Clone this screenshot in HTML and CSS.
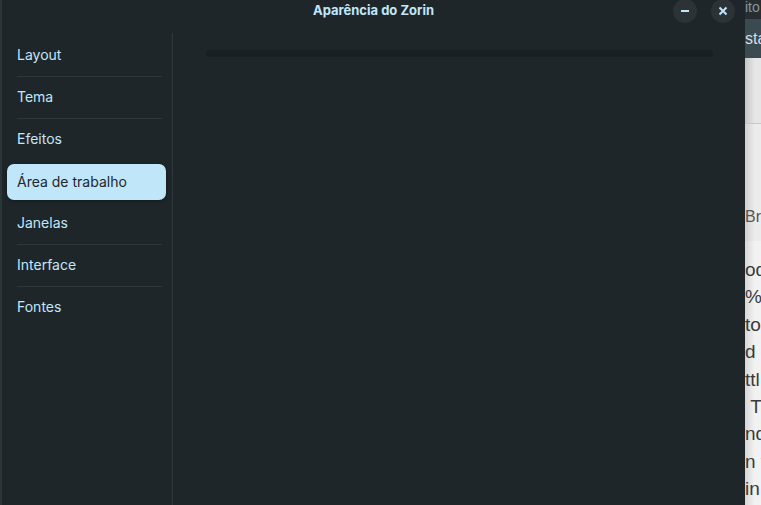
FILE: index.html
```html
<!DOCTYPE html>
<html lang="pt">
<head>
  <meta charset="UTF-8" />
  <title>Aparência do Zorin</title>
  <link rel="stylesheet" href="styles.css">
</head>
<body>
  <div class="desktop">
    <div class="window">
      <div class="titlebar">
        <span class="title">Aparência do Zorin</span>
        <div class="win-buttons">
          <button class="win-btn" aria-label="Minimizar">
            <svg width="10" height="10" viewBox="0 0 10 10"><path d="M1 5h8" stroke="#c0e6fa" stroke-width="2"/></svg>
          </button>
          <button class="win-btn" aria-label="Fechar">
            <svg width="10" height="10" viewBox="0 0 10 10"><path d="M1.5 1.5l7 7M8.5 1.5l-7 7" stroke="#c0e6fa" stroke-width="2"/></svg>
          </button>
        </div>
      </div>
      <div class="body">
        <ul class="sidebar">
          <li class="item">Layout</li>
          <li class="item">Tema</li>
          <li class="item">Efeitos</li>
          <li class="item selected">Área de trabalho</li>
          <li class="item">Janelas</li>
          <li class="item">Interface</li>
          <li class="item">Fontes</li>
        </ul>
        <div class="content">
          <div class="trough"></div>
        </div>
      </div>
    </div>

    <!-- browser window peeking out behind -->
    <div class="behind">
      <div class="behind-tabs">ito</div>
      <div class="behind-toolbar">sta</div>
      <div class="behind-bar"></div>
      <div class="behind-head">Bra</div>
      <div class="behind-text">
        <p>od</p>
        <p>% c</p>
        <p>to</p>
        <p>d g</p>
        <p>ttl</p>
        <p>&nbsp;Ti</p>
        <p>nd</p>
        <p>n t</p>
        <p>in</p>
      </div>
    </div>
  </div>
</body>
</html>
```

FILE: styles.css
```css
:root {
  --bg: #1f262a;
  --accent: #c0e6fa;
  --line: #2e373b;
  --trough: #191f22;
}

html, body {
  margin: 0;
  padding: 0;
  height: 100%;
  overflow: hidden;
}

body {
  font-family: Inter, 'Noto Sans', sans-serif;
  background: var(--bg);
}

.desktop {
  display: flex;
  height: 505px;
}

.window {
  width: 745px;
  flex: none;
  background: var(--bg);
  border-left: 2px solid #2b363a;
  box-sizing: border-box;
  display: flex;
  flex-direction: column;
}

.titlebar {
  height: 33px;
  flex: none;
  display: flex;
  justify-content: center;
  position: relative;
}

.title {
  color: var(--accent);
  font-weight: 700;
  font-size: 13px;
  line-height: 21px;
}

.win-buttons {
  position: absolute;
  right: 10px;
  top: -1px;
  display: flex;
  gap: 14px;
}

.win-btn {
  width: 24px;
  height: 24px;
  border-radius: 50%;
  border: none;
  padding: 0;
  background: #2b3337;
  display: flex;
  align-items: center;
  justify-content: center;
}

.body {
  flex: 1;
  display: flex;
}

.sidebar {
  list-style: none;
  margin: 0;
  padding: 2px 6px 0 5px;
  width: 171px;
  box-sizing: border-box;
  border-right: 1px solid var(--line);
}

.item {
  height: 42px;
  line-height: 40px;
  padding-left: 10px;
  color: var(--accent);
  font-size: 14px;
  position: relative;
}

.item::after {
  content: '';
  position: absolute;
  left: 10px;
  right: 4px;
  bottom: 0;
  border-bottom: 1px solid var(--line);
}

.item:nth-child(3)::after,
.selected::after,
.item:last-child::after {
  display: none;
}

.selected {
  background: var(--accent);
  color: #1f262a;
  border-radius: 7px;
  height: 36px;
  line-height: 36px;
  margin: 3px 0;
  box-shadow: 0 1px 4px rgba(0, 0, 0, 0.4);
}

.content {
  flex: 1;
  padding: 17px 32px 0 33px;
}

.trough {
  height: 7px;
  border-radius: 4px;
  background: var(--trough);
}

.behind {
  flex: 1;
  display: flex;
  flex-direction: column;
  font-family: 'Liberation Sans', sans-serif;
  overflow: hidden;
  white-space: nowrap;
}

.behind-tabs {
  height: 19px;
  background: #262e31;
  color: #8c9599;
  font-size: 14px;
  line-height: 14px;
}

.behind-toolbar {
  height: 39px;
  background: #3a4a50;
  color: #d7dde0;
  font-size: 16px;
  line-height: 40px;
}

.behind-bar {
  height: 65px;
  background: linear-gradient(90deg, #c4c4c4, #e6e6e6 60%);
  border-bottom: 1px solid #c8c8c8;
}

.behind-head {
  height: 117px;
  background: linear-gradient(90deg, #cfcfcf, #ececec 60%);
  color: #555;
  font-size: 16px;
  line-height: 185px;
  overflow: hidden;
}

.behind-text {
  flex: 1;
  background: linear-gradient(90deg, #d6d6d6, #f2f2f2 60%);
  color: #3a3a3a;
  font-size: 19px;
  padding-top: 15px;
}

.behind-text p {
  margin: 0;
  height: 27.4px;
  line-height: 27px;
}
```
